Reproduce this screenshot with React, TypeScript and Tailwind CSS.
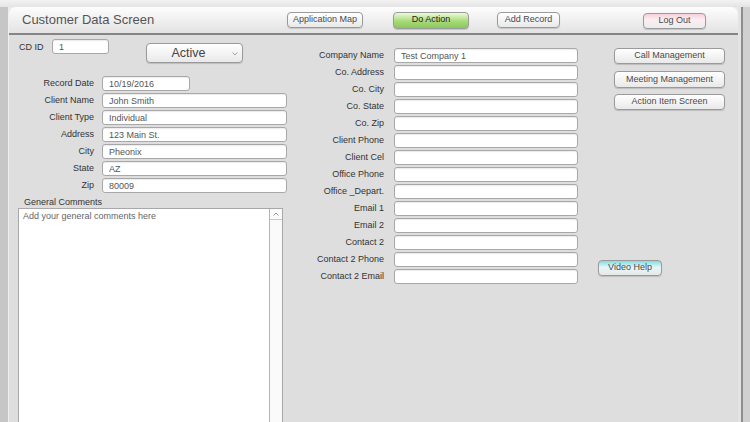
import React from "react";

const LEFT_ROWS: { label: string; value: string; w: string }[] = [
  { label: "Record Date", value: "10/19/2016", w: "w-[88px]" },
  { label: "Client Name", value: "John Smith", w: "w-[185px]" },
  { label: "Client Type", value: "Individual", w: "w-[185px]" },
  { label: "Address", value: "123 Main St.", w: "w-[185px]" },
  { label: "City", value: "Pheonix", w: "w-[185px]" },
  { label: "State", value: "AZ", w: "w-[185px]" },
  { label: "Zip", value: "80009", w: "w-[185px]" },
];

const MID_ROWS: { label: string; value?: string }[] = [
  { label: "Company Name", value: "Test Company 1" },
  { label: "Co. Address" },
  { label: "Co. City" },
  { label: "Co. State" },
  { label: "Co. Zip" },
  { label: "Client Phone" },
  { label: "Client Cel" },
  { label: "Office Phone" },
  { label: "Office _Depart." },
  { label: "Email 1" },
  { label: "Email 2" },
  { label: "Contact 2" },
  { label: "Contact 2 Phone" },
  { label: "Contact 2 Email" },
];

const BTN =
  "h-[16px] flex items-center justify-center rounded-[4px] border border-[#9a9a9a] text-[9px] text-[#4a4a4a] shadow-[0_1px_1px_rgba(0,0,0,0.15)]";
const PLAIN = "bg-[linear-gradient(#ffffff,#e9e9e9)]";

function Field({ value, w }: { value?: string; w: string }) {
  return (
    <input
      readOnly
      defaultValue={value}
      className={`${w} h-[15px] rounded-[3px] border border-[#a8a8a8] bg-white px-[6px] text-[9px] text-[#555] outline-none shadow-[inset_0_1px_1px_rgba(0,0,0,0.08)]`}
    />
  );
}

export default function App() {
  return (
    <div
      className="w-[750px] h-[422px] overflow-hidden flex flex-col bg-[#eaeaea]"
      style={{ fontFamily: '"Liberation Sans", Arial, sans-serif' }}
    >
      <div className="h-[7px] shrink-0 bg-[linear-gradient(#f2f2f2,#e4e4e4)]" />
      <div className="flex flex-1 min-h-0">
        <div className="w-[8px] shrink-0 bg-[#c6c6c6]" />
        <div className="flex-1 flex flex-col rounded-t-[7px] overflow-hidden border-l border-[#efefef] bg-[#dedede]">
          {/* header */}
          <div className="h-[28px] shrink-0 flex items-center bg-[linear-gradient(#fdfdfd,#e3e3e3)] border-b-2 border-[#858585]">
            <div className="w-[278px] pl-[13px] text-[13px] text-[#555]">Customer Data Screen</div>
            <div className={`${BTN} ${PLAIN} w-[76px]`}>Application Map</div>
            <div className={`${BTN} ml-[30px] w-[76px] h-[17px] bg-[linear-gradient(#eafcd6,#a6da78_55%,#8cc85e)] text-[#222] border-[#7a9a6a]`}>
              Do Action
            </div>
            <div className={`${BTN} ${PLAIN} ml-[28px] w-[63px]`}>Add Record</div>
            <div className={`${BTN} ml-[83px] w-[63px] mt-[2px] bg-[linear-gradient(#f7cfd9,#fbeef1_40%,#ececec)]`}>
              Log Out
            </div>
          </div>

          {/* body */}
          <div className="flex flex-1 min-h-0">
            {/* left column */}
            <div className="w-[282px] shrink-0 pt-[4px] flex flex-col">
              <div className="flex items-start">
                <div className="w-[43px] pl-[10px] pt-[2px] text-[9px] text-[#333]">CD ID</div>
                <Field value="1" w="w-[57px]" />
                <div className={`ml-[37px] mt-[4px] w-[97px] h-[20px] relative flex items-center justify-center rounded-[4px] border border-[#9a9a9a] ${PLAIN} shadow-[0_1px_1px_rgba(0,0,0,0.15)]`}>
                  <span className="text-[12.5px] text-[#444] pr-[12px]">Active</span>
                  <svg className="absolute right-[4px] top-[8px]" width="6" height="4" viewBox="0 0 6 4">
                    <path d="M0.5 0.5 L3 3 L5.5 0.5" fill="none" stroke="#999" strokeWidth="0.9" />
                  </svg>
                </div>
              </div>
              <div className="mt-[13px] flex flex-col gap-[2px]">
                {LEFT_ROWS.map((r) => (
                  <div key={r.label} className="flex items-center">
                    <div className="w-[85px] text-right text-[9px] text-[#333]">{r.label}</div>
                    <div className="w-[8px]" />
                    <Field value={r.value} w={r.w} />
                  </div>
                ))}
              </div>
              <div className="mt-[3px] pl-[15px] text-[9px] text-[#333] leading-[12px]">General Comments</div>
              <div className="ml-[9px] w-[265px] flex-1 flex border border-[#a8a8a8] border-b-0 bg-white">
                <div className="flex-1 px-[4px] pt-[1px] text-[9px] text-[#666]">Add your general comments here</div>
                <div className="w-[13px] border-l border-[#b5b5b5] bg-[#fafafa]">
                  <div className="h-[11px] flex items-center justify-center border-b border-[#c8c8c8]">
                    <svg width="6" height="4" viewBox="0 0 6 4">
                      <path d="M0.5 3.5 L3 1 L5.5 3.5" fill="none" stroke="#888" strokeWidth="0.9" />
                    </svg>
                  </div>
                </div>
              </div>
            </div>

            {/* middle column */}
            <div className="pt-[13px] flex flex-col gap-[2px]">
              {MID_ROWS.map((r) => (
                <div key={r.label} className="flex items-center">
                  <div className="w-[93px] text-right text-[9px] text-[#333]">{r.label}</div>
                  <div className="w-[10px]" />
                  <Field value={r.value} w="w-[184px]" />
                </div>
              ))}
            </div>

            {/* right column */}
            <div className="pt-[13px] flex flex-col">
              <div className={`${BTN} ${PLAIN} ml-[36px] w-[111px]`}>Call Management</div>
              <div className={`${BTN} ${PLAIN} ml-[36px] mt-[7px] w-[111px] h-[17px]`}>Meeting Management</div>
              <div className={`${BTN} ${PLAIN} ml-[36px] mt-[6px] w-[111px]`}>Action Item Screen</div>
              <div className={`${BTN} ml-[20px] mt-[150px] w-[64px] bg-[linear-gradient(#7fdde2,#e6f7f8_45%,#e8e8e8)]`}>
                Video Help
              </div>
            </div>
          </div>
        </div>
        <div className="w-[3px] shrink-0 bg-[#e4e4e4]" />
        <div className="w-[2px] shrink-0 bg-[#8e8e8e]" />
        <div className="w-[7px] shrink-0 bg-[#d0d0d0]" />
      </div>
    </div>
  );
}
